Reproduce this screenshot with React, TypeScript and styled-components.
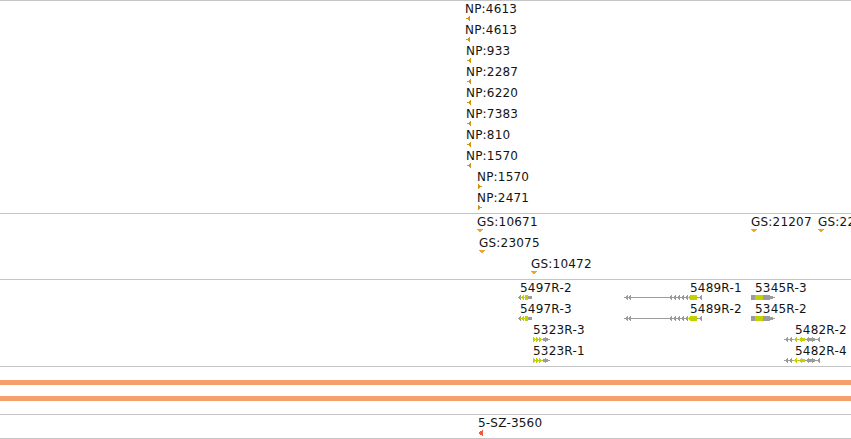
import React from 'react';
import styled, { createGlobalStyle } from 'styled-components';

const GlobalStyle = createGlobalStyle`
    html, body {
        margin: 0;
        padding: 0;
        background: #ffffff;
        overflow: hidden;
    }
    body {
        font-family: "DejaVu Sans", Verdana, sans-serif;
    }
`;

const LIME = '#c3d100';
const GREY = '#9c9c9c';
const LINE = '#c4c4c4';

const Page = styled.div`
    width: 851px;
    height: 439px;
    display: flex;
    flex-direction: column;
    border-top: 1px solid ${LINE};
    box-sizing: border-box;
`;

const Track = styled.div<{ $height: number }>`
    position: relative;
    height: ${(p) => p.$height}px;
    flex-shrink: 0;
    border-bottom: 1px solid ${LINE};
    overflow: hidden;
`;

const BandTrack = styled(Track)`
    display: flex;
    flex-direction: column;
    gap: 11px;
    padding-top: 13px;
    box-sizing: content-box;
    height: 34px;
`;

const Band = styled.div`
    height: 5px;
    background: #f5a06c;
`;

const Feature = styled.div<{ $x: number; $y: number }>`
    position: absolute;
    left: ${(p) => p.$x}px;
    top: ${(p) => p.$y}px;
    display: flex;
    flex-direction: column;
    align-items: flex-start;
`;

const Label = styled.span<{ $shift?: number }>`
    font-size: 12px;
    line-height: 14px;
    height: 14px;
    color: #141414;
    letter-spacing: 0.2px;
    white-space: nowrap;
    margin-left: ${(p) => p.$shift ?? 0}px;
`;

const Glyph = styled.svg`
    display: block;
    flex-shrink: 0;
    shape-rendering: crispEdges;
`;

type Dir = 'left' | 'right' | 'down';

const Marker: React.FC<{ dir: Dir; color: string; w?: number; h?: number }> = ({ dir, color, w = 4, h = 5 }) => {
    const pts =
        dir === 'left'
            ? `${w},0 0,${h / 2} ${w},${h}`
            : dir === 'right'
            ? `0,0 ${w},${h / 2} 0,${h}`
            : `0,0 ${w},0 ${w / 2},${h}`;
    return (
        <Glyph width={w} height={h} viewBox={`0 0 ${w} ${h}`}>
            <polygon points={pts} fill={color} />
        </Glyph>
    );
};

// pieces of a gene model glyph, 5px tall
type Part =
    | { k: 'l' | 'r'; x: number; c: string; w?: number }
    | { k: 'rect'; x: number; w: number; c: string; y?: number; h?: number }
    | { k: 'line'; x: number; w: number; c: string };

const Gene: React.FC<{ width: number; parts: Part[] }> = ({ width, parts }) => (
    <Glyph width={width} height={5} viewBox={`0 0 ${width} 5`}>
        {parts.map((p, i) => {
            if (p.k === 'line') return <rect key={i} x={p.x} y={2} width={p.w} height={1} fill={p.c} />;
            if (p.k === 'rect')
                return <rect key={i} x={p.x} y={p.y ?? 0} width={p.w} height={p.h ?? 5} fill={p.c} />;
            const w = p.w ?? 4;
            const pts =
                p.k === 'l'
                    ? `${p.x + w},0 ${p.x},2.5 ${p.x + w},5`
                    : `${p.x},0 ${p.x + w},2.5 ${p.x},5`;
            return <polygon key={i} points={pts} fill={p.c} />;
        })}
    </Glyph>
);

const np = [
    { name: 'NP:4613', x: 466, dir: 'left' as Dir },
    { name: 'NP:4613', x: 466, dir: 'left' as Dir },
    { name: 'NP:933', x: 467, dir: 'left' as Dir },
    { name: 'NP:2287', x: 467, dir: 'left' as Dir },
    { name: 'NP:6220', x: 467, dir: 'left' as Dir },
    { name: 'NP:7383', x: 467, dir: 'left' as Dir },
    { name: 'NP:810', x: 467, dir: 'left' as Dir },
    { name: 'NP:1570', x: 467, dir: 'left' as Dir },
    { name: 'NP:1570', x: 478, dir: 'right' as Dir },
    { name: 'NP:2471', x: 478, dir: 'right' as Dir },
];

const gs = [
    { name: 'GS:10671', x: 477, row: 0 },
    { name: 'GS:23075', x: 479, row: 1 },
    { name: 'GS:10472', x: 531, row: 2 },
    { name: 'GS:21207', x: 751, row: 0 },
    { name: 'GS:22', x: 818, row: 0 },
];

const leftSmall: Part[] = [
    { k: 'line', x: 0, w: 14, c: GREY },
    { k: 'l', x: 0, c: GREY, w: 3 },
    { k: 'l', x: 2, c: LIME },
    { k: 'l', x: 5, c: LIME },
    { k: 'rect', x: 7, w: 3, c: LIME },
    { k: 'rect', x: 10, w: 4, c: GREY, y: 1, h: 3 },
];

const leftLong: Part[] = [
    { k: 'l', x: 0, c: GREY },
    { k: 'l', x: 3, c: GREY },
    { k: 'line', x: 5, w: 40, c: GREY },
    { k: 'l', x: 44, c: GREY },
    { k: 'l', x: 48, c: GREY },
    { k: 'l', x: 52, c: GREY },
    { k: 'l', x: 56, c: GREY },
    { k: 'l', x: 60, c: GREY },
    { k: 'l', x: 64, c: LIME, w: 3 },
    { k: 'rect', x: 66, w: 7, c: LIME },
    { k: 'line', x: 73, w: 5, c: GREY },
    { k: 'l', x: 74, c: GREY },
];

const rightBlock: Part[] = [
    { k: 'rect', x: 0, w: 4, c: GREY },
    { k: 'rect', x: 4, w: 8, c: LIME },
    { k: 'rect', x: 12, w: 6, c: GREY },
    { k: 'r', x: 18, c: GREY, w: 6 },
];

const rightSmall: Part[] = [
    { k: 'line', x: 0, w: 12, c: LIME },
    { k: 'r', x: 0, c: LIME },
    { k: 'r', x: 3, c: LIME },
    { k: 'r', x: 6, c: LIME },
    { k: 'rect', x: 10, w: 3, c: GREY, y: 1, h: 3 },
    { k: 'r', x: 12, c: GREY, w: 5 },
];

const leftMixed: Part[] = [
    { k: 'line', x: 0, w: 36, c: GREY },
    { k: 'l', x: 0, c: GREY },
    { k: 'l', x: 4, c: GREY },
    { k: 'l', x: 9, c: LIME },
    { k: 'rect', x: 12, w: 1, c: LIME },
    { k: 'line', x: 12, w: 9, c: LIME },
    { k: 'l', x: 14, c: LIME },
    { k: 'rect', x: 17, w: 4, c: LIME, y: 1, h: 3 },
    { k: 'l', x: 21, c: GREY },
    { k: 'rect', x: 24, w: 7, c: GREY, y: 1, h: 3 },
    { k: 'l', x: 25, c: GREY },
    { k: 'l', x: 32, c: GREY },
];

const genes = [
    { name: '5497R-2', x: 518, shift: 2, row: 0, width: 14, parts: leftSmall },
    { name: '5497R-3', x: 518, shift: 2, row: 1, width: 14, parts: leftSmall },
    { name: '5323R-3', x: 533, shift: 0, row: 2, width: 17, parts: rightSmall },
    { name: '5323R-1', x: 533, shift: 0, row: 3, width: 17, parts: rightSmall },
    { name: '5489R-1', x: 624, shift: 66, row: 0, width: 79, parts: leftLong },
    { name: '5489R-2', x: 624, shift: 66, row: 1, width: 79, parts: leftLong },
    { name: '5345R-3', x: 751, shift: 4, row: 0, width: 24, parts: rightBlock },
    { name: '5345R-2', x: 751, shift: 4, row: 1, width: 24, parts: rightBlock },
    { name: '5482R-2', x: 784, shift: 11, row: 2, width: 36, parts: leftMixed },
    { name: '5482R-4', x: 784, shift: 11, row: 3, width: 36, parts: leftMixed },
];

const App: React.FC = () => (
    <>
        <GlobalStyle />
        <Page>
            <Track $height={212}>
                {np.map((f, i) => (
                    <Feature key={i} $x={f.x} $y={1 + i * 21}>
                        <Label $shift={-1}>{f.name}</Label>
                        <Marker dir={f.dir} color="#d4950f" />
                    </Feature>
                ))}
            </Track>
            <Track $height={65}>
                {gs.map((f, i) => (
                    <Feature key={i} $x={f.x} $y={1 + f.row * 21}>
                        <Label>{f.name}</Label>
                        <Marker dir="down" color="#f2a232" w={6} h={4} />
                    </Feature>
                ))}
            </Track>
            <Track $height={86}>
                {genes.map((g, i) => (
                    <Feature key={i} $x={g.x} $y={1 + g.row * 21}>
                        <Label $shift={g.shift}>{g.name}</Label>
                        <Gene width={g.width} parts={g.parts} />
                    </Feature>
                ))}
            </Track>
            <BandTrack $height={47}>
                <Band />
                <Band />
            </BandTrack>
            <Track $height={23}>
                <Feature $x={478} $y={1}>
                    <Label>5-SZ-3560</Label>
                    <Marker dir="left" color="#f25a3a" w={5} h={6} />
                </Feature>
            </Track>
        </Page>
    </>
);

export default App;
